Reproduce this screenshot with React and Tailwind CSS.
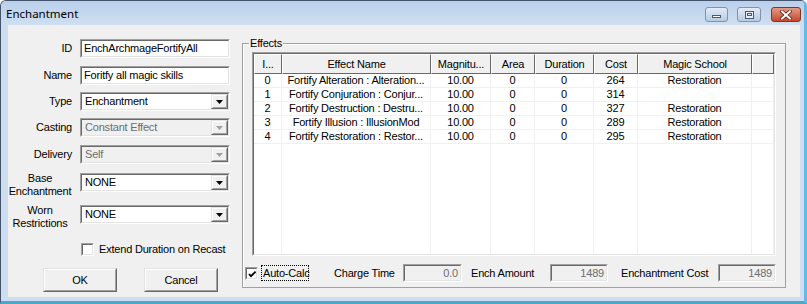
import React from "react";

const columns = [
  { title: "I...", w: "w-[28px]" },
  { title: "Effect Name", w: "w-[149px]" },
  { title: "Magnitu...", w: "w-[60px]" },
  { title: "Area", w: "w-[44px]" },
  { title: "Duration", w: "w-[59px]" },
  { title: "Cost", w: "w-[44px]" },
  { title: "Magic School", w: "w-[114px]" },
  { title: "", w: "w-[22px]" },
];

const effects = [
  ["0", "Fortify Alteration : Alteration...", "10.00", "0", "0", "264", "Restoration", ""],
  ["1", "Fortify Conjuration : Conjur...", "10.00", "0", "0", "314", "", ""],
  ["2", "Fortify Destruction : Destru...", "10.00", "0", "0", "327", "Restoration", ""],
  ["3", "Fortify Illusion : IllusionMod", "10.00", "0", "0", "289", "Restoration", ""],
  ["4", "Fortify Restoration : Restor...", "10.00", "0", "0", "295", "Restoration", ""],
];

// classic 2px sunken frame
function Sunken({ className = "", inner = "bg-white", children }) {
  return (
    <div className={"border border-t-[#a0a0a0] border-l-[#a0a0a0] border-b-white border-r-white " + className}>
      <div className={"h-full w-full border border-t-[#696969] border-l-[#696969] border-b-[#e3e3e3] border-r-[#e3e3e3] " + inner}>
        {children}
      </div>
    </div>
  );
}

function Raised({ className = "", children }) {
  return (
    <div className={"border border-t-[#e3e3e3] border-l-[#e3e3e3] border-b-[#696969] border-r-[#696969] bg-[#f0f0f0] " + className}>
      <div className="h-full w-full border border-t-white border-l-white border-b-[#a0a0a0] border-r-[#a0a0a0] flex items-center justify-center">
        {children}
      </div>
    </div>
  );
}

function Edit({ value }) {
  return (
    <Sunken className="h-[19px] w-[150px]">
      <div className="pl-[2px] leading-[15px] whitespace-nowrap">{value}</div>
    </Sunken>
  );
}

function Combo({ value, disabled }) {
  return (
    <Sunken className="h-[19px] w-[150px]" inner={disabled ? "bg-[#f0f0f0] flex" : "bg-white flex"}>
      <div className={"flex-1 pl-[3px] leading-[15px] whitespace-nowrap " + (disabled ? "text-[#6d6d6d]" : "text-black")}>
        {value}
      </div>
      <Raised className="w-[17px] h-full">
        <svg width="7" height="4" viewBox="0 0 7 4">
          <path d="M0 0h7L3.5 4z" fill={disabled ? "#a0a0a0" : "#000"} />
        </svg>
      </Raised>
    </Sunken>
  );
}

function Row({ label, mt, twoLine, children }) {
  return (
    <div className={"flex items-center h-[19px] " + mt}>
      {twoLine ? (
        <div className="w-[64px] pt-[4px] text-center leading-[13px]">
          {label[0]}
          <br />
          {label[1]}
        </div>
      ) : (
        <div className="w-[64px] text-right">{label}</div>
      )}
      <div className="ml-[8px]">{children}</div>
    </div>
  );
}

function Check({ checked }) {
  return (
    <Sunken className="w-[13px] h-[13px]">
      {checked && (
        <svg width="11" height="11" viewBox="0 0 11 11">
          <path d="M2 5l2 2.2L8.6 2.6" stroke="#000" strokeWidth="1.8" fill="none" />
        </svg>
      )}
    </Sunken>
  );
}

function ReadOnly({ value, w }) {
  return (
    <Sunken className={"h-[18px] " + w} inner="bg-[#f0f0f0]">
      <div className="text-right pr-[2px] leading-[14px] text-[#6d6d6d]">{value}</div>
    </Sunken>
  );
}

export default function App() {
  return (
    <div className="w-[807px] h-[304px] flex flex-col bg-[#cedef1] border-l border-t border-[#42536a] border-r-[3px] border-r-[#62b8e6] border-b-[3px] border-b-[#49a8cf] rounded-tl-[6px] rounded-tr-[6px] overflow-hidden font-['Liberation_Sans',Arial,sans-serif] text-[11px] text-black tracking-[-0.2px]">
      {/* Title bar */}
      <div className="h-[24px] flex items-start bg-gradient-to-b from-[#b9cfea] to-[#d0dff1]">
        <div className="pl-[5px] pt-[5px] font-['Noto_Sans',sans-serif] text-[11.5px] tracking-normal leading-[16px]">Enchantment</div>
        <div className="flex-1" />
        <div className="flex pt-[6px] pr-[3px]">
          <div className="w-[23px] h-[15px] rounded-[3px] border border-[#7e93ae] bg-gradient-to-b from-[#e2ebf6] to-[#b9cbe2] flex items-end justify-center pb-[3px]">
            <div className="w-[9px] h-[3px] bg-white border border-[#465a74]" />
          </div>
          <div className="ml-[9px] w-[24px] h-[15px] rounded-[3px] border border-[#7e93ae] bg-gradient-to-b from-[#e2ebf6] to-[#b9cbe2] flex items-center justify-center">
            <div className="w-[9px] h-[8px] border border-[#465a74] bg-[#e8eef6] flex items-center justify-center">
              <div className="w-[5px] h-[3px] border border-[#465a74]" />
            </div>
          </div>
          <div className="ml-[10px] w-[30px] h-[15px] rounded-[3px] border border-[#7b3826] bg-gradient-to-b from-[#e39a85] to-[#c7462b] flex items-center justify-center">
            <svg width="12" height="10" viewBox="0 0 12 10">
              <path d="M2 1.5l8 7M10 1.5l-8 7" stroke="#5a2216" strokeWidth="3.6" strokeLinecap="square" />
              <path d="M2 1.5l8 7M10 1.5l-8 7" stroke="#fff" strokeWidth="2" strokeLinecap="square" />
            </svg>
          </div>
        </div>
      </div>

      {/* Frame + client area */}
      <div className="flex-1 flex pl-[7px] pr-[4px] pb-[4px]">
        <div className="flex-1 bg-[#f0f0f0] flex">
          {/* Left panel */}
          <div className="w-[234px] flex flex-col">
            <Row label="ID" mt="mt-[14px]">
              <Edit value="EnchArchmageFortifyAll" />
            </Row>
            <Row label="Name" mt="mt-[8px]">
              <Edit value="Foritfy all magic skills" />
            </Row>
            <Row label="Type" mt="mt-[7px]">
              <Combo value="Enchantment" />
            </Row>
            <Row label="Casting" mt="mt-[7px]">
              <Combo value="Constant Effect" disabled />
            </Row>
            <Row label="Delivery" mt="mt-[8px]">
              <Combo value="Self" disabled />
            </Row>
            <Row label={["Base", "Enchantment"]} twoLine mt="mt-[9px]">
              <Combo value="NONE" />
            </Row>
            <Row label={["Worn", "Restrictions"]} twoLine mt="mt-[13px]">
              <Combo value="NONE" />
            </Row>
            <div className="flex items-center mt-[19px] ml-[73px] h-[13px]">
              <Check />
              <div className="ml-[5px] whitespace-nowrap">Extend Duration on Recast</div>
            </div>
            <div className="flex mt-[12px] ml-[35px]">
              <Raised className="w-[74px] h-[24px]">OK</Raised>
              <Raised className="ml-[27px] w-[74px] h-[24px]">Cancel</Raised>
            </div>
          </div>

          {/* Effects group */}
          <div className="relative mt-[18px] w-[544px] h-[245px] border border-[#a0a0a0] shadow-[inset_1px_1px_0_#fff]">
            <div className="absolute left-[6px] top-[-8px] px-[1px] bg-[#f0f0f0] leading-[14px]">Effects</div>

            <Sunken className="ml-[9px] mt-[8px] w-[524px] h-[204px]" inner="bg-white flex overflow-hidden">
              {columns.map((c, ci) => (
                <div key={ci} className={"flex flex-col shrink-0 " + c.w}>
                  <div className="h-[20px] border border-t-white border-l-white border-r-[#696969] border-b-[#696969] bg-[#f0f0f0] text-center leading-[18px] whitespace-nowrap overflow-hidden">
                    {c.title}
                  </div>
                  {effects.map((r, ri) => (
                    <div key={ri} className="h-[14px] border-b border-r border-[#f0f0f0] text-center leading-[13px] whitespace-nowrap overflow-hidden">
                      {r[ci]}
                    </div>
                  ))}
                  <div className="flex-1 border-r border-[#f0f0f0]" />
                </div>
              ))}
            </Sunken>

            <div className="flex items-center mt-[8px] ml-[2px] h-[18px] whitespace-nowrap">
              <Check checked />
              <div className="ml-[3px] w-[48px] h-[16px] border border-dotted border-black leading-[14px] pl-[1px]">Auto-Calc</div>
              <div className="ml-[25px] w-[69px]">Charge Time</div>
              <ReadOnly value="0.0" w="w-[59px]" />
              <div className="ml-[9px] w-[79px]">Ench Amount</div>
              <ReadOnly value="1489" w="w-[58px]" />
              <div className="ml-[13px] w-[97px]">Enchantment Cost</div>
              <ReadOnly value="1489" w="w-[58px]" />
            </div>
          </div>
        </div>
      </div>
    </div>
  );
}
